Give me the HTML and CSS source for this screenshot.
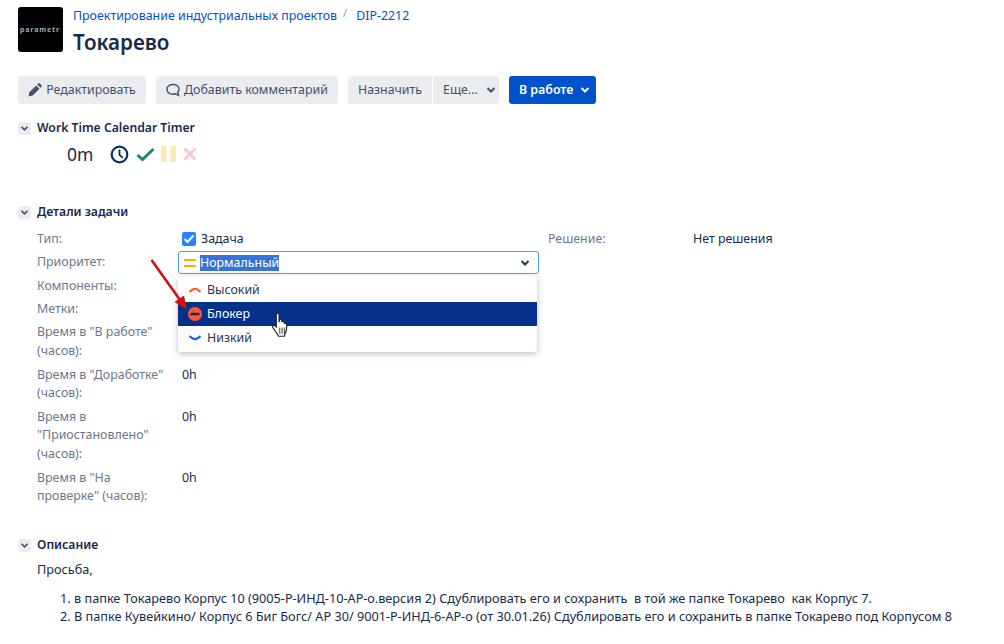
FILE: index.html
```html
<!DOCTYPE html>
<html lang="ru">
<head>
<meta charset="utf-8">
<title>DIP-2212 Токарево</title>
<link rel="stylesheet" href="styles.css">
</head>
<body>
<header class="head">
  <div class="logo"><span>parametr</span></div>
  <div class="head-text">
    <nav class="crumbs"><a>Проектирование индустриальных проектов</a><span class="sep">/</span><a>DIP-2212</a></nav>
    <h1>Токарево</h1>
  </div>
</header>
<div class="toolbar">
  <button class="btn edit"><svg width="14" height="14" viewBox="0 0 14 14"><path d="M.5 13.500l.9-4.200 6.800-6.800 3.300 3.300-6.800 6.800zM9.200 1.500l.9-.9a1.200 1.200 0 0 1 1.700 0l1.600 1.600a1.200 1.200 0 0 1 0 1.700l-.9.9z" fill="#42526e"/></svg>Редактировать</button>
  <button class="btn comment"><svg width="14" height="14" viewBox="0 0 14 14"><path d="M7 1.500c3.300 0 6 1.900 6 4.800 0 1.200-.5 2.300-1.300 3.100l.8 2.900-3-1.500c-.8.3-1.600.4-2.500.4-3.300 0-6-1.900-6-4.900S3.700 1.500 7 1.500z" fill="none" stroke="#42526e" stroke-width="1.500"/></svg>Добавить комментарий</button>
  <div class="group">
    <button class="btn assign">Назначить</button>
    <button class="btn more">Еще...<svg class="chev" width="10" height="8" viewBox="0 0 10 8"><path d="M1.500 2l3.500 3.500L8.500 2" fill="none" stroke="#42526e" stroke-width="2"/></svg></button>
  </div>
  <button class="btn status">В работе<svg class="chev" width="10" height="8" viewBox="0 0 10 8"><path d="M1.500 2l3.500 3.500L8.500 2" fill="none" stroke="#fff" stroke-width="2"/></svg></button>
</div>

<section class="timer-section">
  <h2 class="sec-head"><span class="toggle"><svg width="9" height="7" viewBox="0 0 10 8"><path d="M1.500 2l3.500 3.500L8.500 2" fill="none" stroke="#42526e" stroke-width="2"/></svg></span>Work Time Calendar Timer</h2>
  <div class="timer">
    <span class="time">0m</span>
    <svg width="19" height="19" viewBox="0 0 19 19"><circle cx="9.500" cy="9.500" r="7.800" fill="none" stroke="#0b2e66" stroke-width="2.200"/><path d="M9.500 4.500v5.300l3.300 3" fill="none" stroke="#0b2e66" stroke-width="1.800"/></svg>
    <svg class="i-check" width="19" height="15" viewBox="0 0 19 15"><path d="M1.500 8l5 4.500L17.500 2" fill="none" stroke="#1f8a5b" stroke-width="3"/></svg>
    <svg class="i-pause" width="15" height="16" viewBox="0 0 15 16"><path d="M0 0h5.500v16H0zM9.500 0H15v16H9.500z" fill="#fee9b0"/></svg>
    <svg class="i-x" width="14" height="14" viewBox="0 0 14 14"><path d="M1.500 1.500l11 11M12.500 1.500l-11 11" stroke="#f8c9c6" stroke-width="3"/></svg>
  </div>
</section>

<section class="details">
  <h2 class="sec-head"><span class="toggle"><svg width="9" height="7" viewBox="0 0 10 8"><path d="M1.500 2l3.500 3.500L8.500 2" fill="none" stroke="#42526e" stroke-width="2"/></svg></span>Детали задачи</h2>
  <div class="fields">
    <div class="row">
      <div class="label">Тип:</div>
      <div class="value type"><span class="checkbox"><svg width="14" height="14" viewBox="0 0 14 14"><path d="M2.500 7l3 3 6-6.500" fill="none" stroke="#fff" stroke-width="2"/></svg></span>Задача</div>
      <div class="label side">Решение:</div>
      <div class="value">Нет решения</div>
    </div>
    <div class="row"><div class="label">Приоритет:</div></div>
    <div class="row"><div class="label">Компоненты:</div></div>
    <div class="row"><div class="label">Метки:</div></div>
    <div class="row tall"><div class="label">Время в "В работе" (часов):</div></div>
    <div class="row tall"><div class="label">Время в "Доработке" (часов):</div><div class="value">0h</div></div>
    <div class="row tall"><div class="label">Время в "Приостановлено" (часов):</div><div class="value">0h</div></div>
    <div class="row tall"><div class="label">Время в "На проверке" (часов):</div><div class="value">0h</div></div>
  </div>

  <div class="select">
    <svg width="12" height="8" viewBox="0 0 12 8"><path d="M0 0h12v2H0zM0 6h12v2H0z" fill="#ffab00"/></svg>
    <span class="selected">Нормальный</span>
    <svg class="select-chev" width="10" height="8" viewBox="0 0 10 8"><path d="M1.500 2l3.500 3.500L8.500 2" fill="none" stroke="#253858" stroke-width="2"/></svg>
  </div>
  <ul class="menu">
    <li><svg width="14" height="14" viewBox="0 0 14 14"><path d="M1.500 9c2-2 3.800-3.200 5.500-3.200S10.500 7 12.500 9" fill="none" stroke="#ff5630" stroke-width="2"/></svg>Высокий</li>
    <li class="active"><svg width="14" height="14" viewBox="0 0 14 14"><circle cx="7" cy="7" r="7" fill="#ff5630"/><path d="M2.500 5.800h9v2.400h-9z" fill="#0b2e66"/></svg>Блокер</li>
    <li><svg width="14" height="14" viewBox="0 0 14 14"><path d="M1.500 5c2 2 3.800 3.200 5.500 3.200S10.500 7 12.500 5" fill="none" stroke="#0065ff" stroke-width="2"/></svg>Низкий</li>
  </ul>
  <svg class="arrow" width="42" height="52" viewBox="0 0 42 52"><path d="M1.500 1l30 42" stroke="#d40f14" stroke-width="2.600" fill="none"/><path d="M37 50.500L24.500 43l9.500-6.500z" fill="#d40f14"/></svg>
  <svg class="cursor" width="20" height="27" viewBox="0 0 18 26"><path d="M4.500 2.200c0-1.500 2.600-1.500 2.600 0v7.600l.4-2c.3-1 2.100-.9 2.300.2l.1 1.600c.3-1 2-.9 2.200.2l.1 1.500c.4-.9 2-.6 2.100.5.300 2.900.2 6-1 8.200-.5 1-1 2.300-1 3.300H6.500c-.3-1.500-1.300-2.600-2.300-3.800L1.200 15c-1-1.500.8-3 2.200-1.800l1.100 1.300z" fill="#fff" stroke="#222" stroke-width="1.100"/><path d="M7.800 15v6M10 15v6M12.200 15v6" stroke="#222" stroke-width=".8"/></svg>
</section>

<section class="desc">
  <h2 class="sec-head"><span class="toggle"><svg width="9" height="7" viewBox="0 0 10 8"><path d="M1.500 2l3.500 3.500L8.500 2" fill="none" stroke="#42526e" stroke-width="2"/></svg></span>Описание</h2>
  <p>Просьба,</p>
  <ol>
    <li>в папке Токарево Корпус 10 (9005-Р-ИНД-10-АР-о.версия 2) Сдублировать его и сохранить&nbsp; в той же папке Токарево&nbsp; как Корпус 7.</li>
    <li>В папке Кувейкино/ Корпус 6 Биг Богс/ АР 30/ 9001-Р-ИНД-6-АР-о (от 30.01.26) Сдублировать его и сохранить в папке Токарево под Корпусом 8</li>
  </ol>
</section>
</body>
</html>
```
FILE: styles.css
```css
* { box-sizing: border-box; }
html, body { margin: 0; height: 644px; overflow: hidden; }
body {
  padding: 7px 0 0 18px;
  background: #fff;
  color: #172b4d;
  font: 12.4px/18.6px "Noto Sans", "Open Sans", sans-serif;
}
.head { display: flex; gap: 10px; height: 45px; }
.logo {
  width: 45px; height: 45px; border-radius: 3px; background: #000;
  display: flex; align-items: center; justify-content: center;
}
.logo span { color: #a8a8a8; font: 700 7px/8px "Noto Sans", sans-serif; letter-spacing: .9px; margin-left: -1px; }
.head-text { display: flex; flex-direction: column; }
.crumbs { color: #0052cc; display: flex; height: 18px; }
.sep { color: #97a0af; margin: -3px 9px 0 6px; font-size: 11px; }
h1 { margin: 3px 0 0; font-size: 20.6px; line-height: 28px; font-weight: 600; color: #172b4d; }
.toolbar { display: flex; gap: 10px; margin-top: 24px; height: 28px; }
.btn {
  border: 0; border-radius: 3px; height: 28px; padding: 0;
  background: #ebecf0; color: #42526e; font: inherit;
  display: flex; align-items: center; justify-content: center;
}
.edit { width: 128px; gap: 4px; }
.comment { width: 182px; gap: 4px; }
.group { display: flex; gap: 1px; }
.assign { width: 84px; border-radius: 3px 0 0 3px; }
.more { width: 66px; border-radius: 0 3px 3px 0; gap: 8px; justify-content: flex-start; padding-left: 10px; }
.status { width: 87px; gap: 7px; background: #0052cc; color: #fff; font-weight: 600; justify-content: flex-start; padding-left: 10px; }
.sec-head {
  margin: 0; display: flex; align-items: center; gap: 6px; height: 18px;
  font-size: 12.2px; font-weight: 600; color: #172b4d;
}
.toggle {
  width: 13px; height: 13px; border-radius: 3px; background: #ebecf0;
  display: flex; align-items: center; justify-content: center;
}
.timer-section { margin-top: 15px; }
.timer { display: flex; align-items: center; margin: 7px 0 0 49px; height: 20px; }
.time { font-size: 17.5px; line-height: 20px; width: 43px; color: #172b4d; }
.i-check { margin-left: 7px; }
.i-pause { margin-left: 6px; }
.i-x { margin-left: 7px; }
.details { margin-top: 39px; position: relative; }
.fields { margin: 9px 0 0 19px; }
.row { display: flex; padding-bottom: 4.7px; }
.row.tall { padding-bottom: 5.2px; }
.label { width: 145px; padding-right: 10px; color: #6b778c; flex: none; }
.value { color: #172b4d; }
.type { display: flex; align-items: center; gap: 5px; width: 366px; }
.checkbox {
  width: 14px; height: 14px; border-radius: 2px; background: #2684ff;
  display: flex;
}
.select {
  position: absolute; left: 160px; top: 48px; width: 361px; height: 23px;
  border: 1px solid #4c9aff; border-radius: 3px; background: #fff;
  display: flex; align-items: center; padding: 0 8px 0 5px; gap: 4px; color: #fff;
}
.selected { background: #3573d6; color: #fff; line-height: 16px; }
.select-chev { margin-left: auto; }
.menu {
  position: absolute; left: 160px; top: 73px; width: 359px; height: 76px;
  margin: 0; padding: 2px 0; list-style: none; background: #fff; border-radius: 3px;
  box-shadow: 0 2px 6px rgba(9, 30, 66, .28);
}
.menu li { height: 24px; display: flex; align-items: center; gap: 5px; padding-left: 10px; color: #253858; }
.menu li.active { background: #05318c; color: #fff; }
.arrow { position: absolute; left: 132px; top: 56px; }
.cursor { position: absolute; left: 253px; top: 109px; }
.desc { margin-top: 25px; }
.desc p { margin: 6px 0 0 19px; color: #172b4d; font-size: 12.7px; }
.desc ol { margin: 10px 0 0; padding: 0 0 0 56px; color: #172b4d; white-space: nowrap; font-size: 12.7px; }
.desc ol li { height: 18.6px; }
```
